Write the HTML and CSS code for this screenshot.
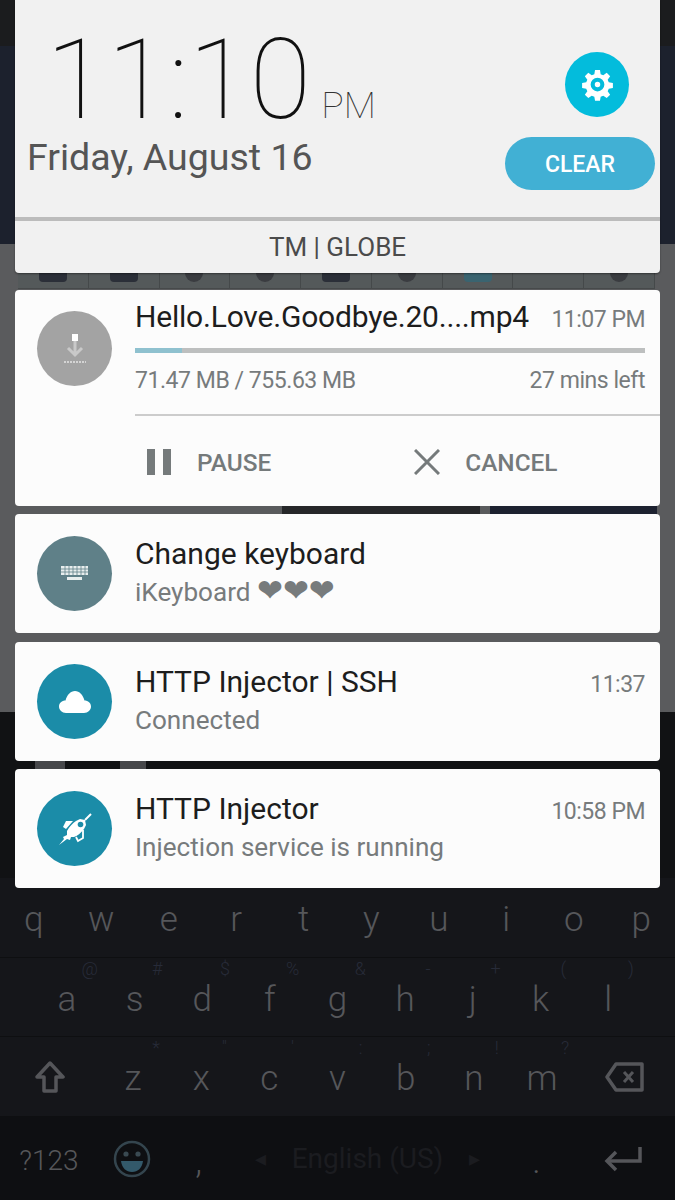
FILE: index.html
```html
<!DOCTYPE html>
<html lang="en">
<head>
    <meta charset="UTF-8">
    <meta name="viewport" content="width=device-width, initial-scale=1.0">
    <title>Notifications</title>
    <link rel="stylesheet" href="styles.css">
</head>
<body>
    <div class="screen">
        <!-- Dimmed app behind the shade -->
        <div class="wall">
            <div class="band-top"></div>
            <div class="band-navy"></div>
            <div class="band-gray">
                <div class="toolbar">
                    <div class="tool"><span class="tool-ico"></span></div>
                    <div class="tool"><span class="tool-ico"></span></div>
                    <div class="tool"><span class="tool-ico round"></span></div>
                    <div class="tool"><span class="tool-ico round"></span></div>
                    <div class="tool"><span class="tool-ico"></span></div>
                    <div class="tool"><span class="tool-ico round"></span></div>
                    <div class="tool"><span class="tool-ico teal"></span></div>
                    <div class="tool"></div>
                    <div class="tool"><span class="tool-ico round"></span></div>
                </div>
                <div class="thumbs">
                    <div class="thumb-dark"></div>
                    <div class="thumb-navy"></div>
                </div>
            </div>
            <div class="keyboard">
                <div class="peek">
                    <span class="peek-a"></span>
                    <span class="peek-b"></span>
                </div>
                <div class="kb-row">
                    <div class="key">q</div><div class="key">w</div><div class="key">e</div><div class="key">r</div><div class="key">t</div>
                    <div class="key">y</div><div class="key">u</div><div class="key">i</div><div class="key">o</div><div class="key">p</div>
                </div>
                <div class="kb-row home">
                    <div class="key">a<span class="hint">@</span></div>
                    <div class="key">s<span class="hint">#</span></div>
                    <div class="key">d<span class="hint">$</span></div>
                    <div class="key">f<span class="hint">%</span></div>
                    <div class="key">g<span class="hint">&amp;</span></div>
                    <div class="key">h<span class="hint">-</span></div>
                    <div class="key">j<span class="hint">+</span></div>
                    <div class="key">k<span class="hint">(</span></div>
                    <div class="key">l<span class="hint">)</span></div>
                </div>
                <div class="kb-row lower">
                    <div class="key side">
                        <svg width="30" height="32" viewBox="0 0 30 32"><path d="M15 2 L28 16 H21 V30 H9 V16 H2 Z" fill="none" stroke="#55565a" stroke-width="3.5" stroke-linejoin="round"/></svg>
                    </div>
                    <div class="key">z<span class="hint">*</span></div>
                    <div class="key">x<span class="hint">"</span></div>
                    <div class="key">c<span class="hint">'</span></div>
                    <div class="key">v<span class="hint">:</span></div>
                    <div class="key">b<span class="hint">;</span></div>
                    <div class="key">n<span class="hint">!</span></div>
                    <div class="key">m<span class="hint">?</span></div>
                    <div class="key side">
                        <svg width="40" height="30" viewBox="0 0 40 30"><path d="M11 2 H37 V28 H11 L2 15 Z" fill="none" stroke="#55565a" stroke-width="3.5" stroke-linejoin="round"/><path d="M19 10 L28 20 M28 10 L19 20" stroke="#55565a" stroke-width="3"/></svg>
                    </div>
                </div>
                <div class="kb-row bottom">
                    <div class="key sym">?123</div>
                    <div class="key">
                        <svg width="38" height="38" viewBox="0 0 38 38"><circle cx="19" cy="19" r="17" fill="none" stroke="#34454e" stroke-width="2.5"/><circle cx="13" cy="14" r="2.6" fill="#3a4a52"/><circle cx="25" cy="14" r="2.6" fill="#3a4a52"/><path d="M8 21 H30 C29 28 25 32 19 32 C13 32 9 28 8 21 Z" fill="#33596a"/></svg>
                    </div>
                    <div class="key punct">,</div>
                    <div class="lang"><span class="lang-arrow">&#9666;</span>English (US)<span class="lang-arrow">&#9656;</span></div>
                    <div class="key punct">.</div>
                    <div class="key">
                        <svg width="38" height="26" viewBox="0 0 38 26"><path d="M36 1 V15 H5" fill="none" stroke="#55565a" stroke-width="3.5"/><path d="M12 6 L3 15 L12 24" fill="none" stroke="#55565a" stroke-width="3.5"/></svg>
                    </div>
                </div>
            </div>
        </div>

        <!-- Notification shade -->
        <div class="shade">
            <div class="quick">
                <div class="quick-top">
                    <div class="clock">
                        <div class="time">11:10<span class="ampm">PM</span></div>
                        <div class="date">Friday, August 16</div>
                    </div>
                    <div class="quick-btns">
                        <div class="gear">
                            <svg width="33" height="33" viewBox="0 0 24 24"><path fill="#fff" fill-rule="evenodd" d="M10.200 1.500h3.600l.5 3 1.900.8 2.500-1.800 2.500 2.500-1.800 2.500.8 1.900 3 .5v3.600l-3 .5-.8 1.900 1.800 2.500-2.500 2.500-2.500-1.800-1.900.8-.5 3h-3.600l-.5-3-1.900-.8-2.500 1.800-2.500-2.500 1.800-2.500-.8-1.900-3-.5v-3.600l3-.5.8-1.900-1.800-2.500 2.500-2.500 2.500 1.800 1.900-.8zM12 7a5 5 0 1 0 0 10 5 5 0 0 0 0-10zm0 3a2 2 0 1 1 0 4 2 2 0 0 1 0-4z"/></svg>
                        </div>
                        <div class="clear">CLEAR</div>
                    </div>
                </div>
                <div class="carrier">TM | GLOBE</div>
            </div>

            <div class="card download">
                <div class="avatar gray">
                    <svg width="30" height="42" viewBox="0 0 30 42"><rect x="12" y="6" width="6" height="7" fill="#fff"/><path d="M15 13 V27 M8 20 L15 27 L22 20" fill="none" stroke="#c9c9c9" stroke-width="3"/><path d="M4 34 H26" stroke="#d4d4d4" stroke-width="2" stroke-dasharray="2 1"/></svg>
                </div>
                <div class="body">
                    <div class="line">
                        <div class="title">Hello.Love.Goodbye.20....mp4</div>
                        <div class="stamp">11:07 PM</div>
                    </div>
                    <div class="progress"><div class="progress-fill"></div></div>
                    <div class="line meta">
                        <div>71.47 MB / 755.63 MB</div>
                        <div>27 mins left</div>
                    </div>
                    <div class="actions">
                        <div class="action pause-act">
                            <svg width="24" height="26" viewBox="0 0 24 26"><rect width="8" height="26" fill="#757a7b"/><rect x="16" width="8" height="26" fill="#757a7b"/></svg>
                            PAUSE
                        </div>
                        <div class="action cancel-act">
                            <svg width="26" height="26" viewBox="0 0 26 26"><path d="M1 1 L25 25 M25 1 L1 25" stroke="#757a7b" stroke-width="3"/></svg>
                            CANCEL
                        </div>
                    </div>
                </div>
            </div>

            <div class="card small">
                <div class="avatar slate">
                    <svg width="27" height="15" viewBox="0 0 27 15"><path fill="#e8eeee" d="M0 0h27v9H0z"/><path stroke="#5f8088" stroke-width=".8" d="M0 3h27M0 6h27M4 0v9M8 0v9M12 0v9M16 0v9M20 0v9M24 0v9"/><rect x="6" y="11" width="15" height="3" fill="#e8eeee"/></svg>
                </div>
                <div class="body">
                    <div class="line"><div class="title">Change keyboard</div></div>
                    <div class="sub">iKeyboard <span class="hearts">&#10084;&#10084;&#10084;</span></div>
                </div>
            </div>

            <div class="card small">
                <div class="avatar teal-bg">
                    <svg width="32" height="22" viewBox="0 0 32 22"><path fill="#fff" d="M7 22 C3 22 0 19 0 15.500 C0 12 3 9.500 6.500 9.500 C8 4 11.500 0 16 0 C20.500 0 24 4 25.500 9.500 C29 9.500 32 12 32 15.500 C32 19 29 22 25 22 Z"/></svg>
                </div>
                <div class="body">
                    <div class="line">
                        <div class="title">HTTP Injector | SSH</div>
                        <div class="stamp">11:37</div>
                    </div>
                    <div class="sub">Connected</div>
                </div>
            </div>

            <div class="card small">
                <div class="avatar teal-bg">
                    <svg width="34" height="34" viewBox="0 0 34 34"><path fill="#fff" d="M1 33 L6 27 L5 25 L9 23 L9 19 C11 15 15 11 18 9 L22 7 L27 8 L28 13 L26 17 C23 21 19 24 16 25 L13 25 L12 28 L9 27 Z"/><circle cx="22.500" cy="12.500" r="2.800" fill="#1b8ca8"/><path fill="#fff" d="M15 9 L8 9 L5 15 L8 17 Z"/><path d="M25 18 L25 26 L20 29 L18 25" fill="none" stroke="#fff" stroke-width="1.800"/><path d="M27 8 L33 2" stroke="#fff" stroke-width="2"/></svg>
                </div>
                <div class="body">
                    <div class="line">
                        <div class="title">HTTP Injector</div>
                        <div class="stamp">10:58 PM</div>
                    </div>
                    <div class="sub">Injection service is running</div>
                </div>
            </div>
        </div>
    </div>
</body>
</html>
```

FILE: styles.css
```css
/* General reset */
* {
    margin: 0;
    padding: 0;
    box-sizing: border-box;
}

body {
    font-family: 'Roboto', 'Liberation Sans', sans-serif;
    background: #111214;
}

.screen {
    position: relative;
    width: 675px;
    height: 1200px;
    overflow: hidden;
}

/* App behind the shade */
.wall {
    display: flex;
    flex-direction: column;
    height: 100%;
}

.band-top {
    height: 46px;
    background: #1b1c1e;
}

.band-navy {
    height: 198px;
    background: #1c212d;
}

.band-gray {
    height: 468px;
    background: #5a5b5d;
}

.toolbar {
    display: flex;
    height: 45px;
    margin: 0 20px 0 18px;
    background: #54595a;
    border-bottom: 1px solid #46494a;
}

.tool {
    flex: 1;
    display: flex;
    align-items: flex-end;
    justify-content: center;
    padding-bottom: 6px;
    border-right: 1px solid #45494a;
}

.tool-ico {
    width: 28px;
    height: 14px;
    background: #2b2f38;
    border-radius: 0 0 4px 4px;
}

.tool-ico.round {
    width: 18px;
    height: 12px;
    background: #3a3c40;
    border-radius: 0 0 9px 9px;
}

.tool-ico.teal {
    height: 16px;
    background: #3a6470;
}

.thumbs {
    display: flex;
    height: 20px;
    margin: 210px 18px 0 282px;
}

.thumb-dark {
    width: 198px;
    background: #262729;
}

.thumb-navy {
    flex: 1;
    margin-left: 10px;
    background: #1d2230;
}

/* Keyboard */
.keyboard {
    flex: 1;
    display: flex;
    flex-direction: column;
    background: #15161a;
    color: #56575a;
}

.peek {
    display: flex;
    height: 166px;
    padding-top: 49px;
    background: #111214;
}

.peek-a {
    width: 30px;
    height: 8px;
    margin-left: 35px;
    background: #46474a;
}

.peek-b {
    width: 26px;
    height: 8px;
    margin-left: 55px;
    background: #46474a;
}

.kb-row {
    display: flex;
    height: 80px;
    border-bottom: 1px solid #0e0f11;
}

.key {
    position: relative;
    flex: 1;
    display: flex;
    align-items: center;
    justify-content: center;
    padding-top: 4px;
    font-size: 35px;
    font-weight: 300;
}

.home {
    padding: 0 33px;
    height: 79px;
}

.lower {
    height: 80px;
}

.key.side {
    flex: 0 0 99px;
    padding: 0;
}

.hint {
    position: absolute;
    top: 0;
    right: 0;
    width: 22px;
    text-align: center;
    font-size: 18px;
    color: #272b38;
}

.bottom {
    height: 83px;
    border: 0;
    background: #0e0f12;
}

.bottom .key {
    flex: 0 0 67px;
    padding: 0;
}

.bottom .key:last-child {
    flex: 0 0 105px;
}

.bottom .key.sym {
    flex: 0 0 98px;
    padding-top: 3px;
    font-size: 28px;
}

.bottom .key.punct {
    padding-top: 6px;
}

.lang {
    flex: 1;
    display: flex;
    align-items: center;
    justify-content: center;
    gap: 26px;
    font-size: 28px;
    color: #1b1c20;
}

.lang-arrow {
    font-size: 22px;
}

/* Shade */
.shade {
    position: absolute;
    top: 0;
    left: 15px;
    width: 645px;
    display: flex;
    flex-direction: column;
}

.quick {
    height: 273px;
    background: #f1f1f1;
    border-radius: 0 0 4px 4px;
    box-shadow: 0 1px 2px rgba(0, 0, 0, 0.4);
}

.quick-top {
    display: flex;
    justify-content: space-between;
    height: 221px;
    border-bottom: 4px solid #bcbcbc;
}

.clock {
    padding: 34px 0 0 12px;
}

.time {
    padding-left: 19px;
    font-size: 112px;
    line-height: 92px;
    font-weight: 100;
    color: #111;
}

.ampm {
    margin-left: 10px;
    font-size: 37.500px;
    color: #333;
}

.date {
    margin-top: -15px;
    font-size: 37.500px;
    line-height: 42px;
    color: #555;
}

.quick-btns {
    display: flex;
    flex-direction: column;
    align-items: flex-end;
    padding: 52px 5px 0 0;
}

.gear {
    display: flex;
    align-items: center;
    justify-content: center;
    width: 64px;
    height: 65px;
    margin-right: 26px;
    background: #03bcdc;
    border-radius: 50%;
}

.clear {
    width: 150px;
    height: 53px;
    margin-top: 20px;
    background: #41b0d4;
    border-radius: 27px;
    color: #fff;
    font-size: 23px;
    font-weight: 500;
    line-height: 55px;
    text-align: center;
}

.carrier {
    height: 48px;
    font-size: 26px;
    line-height: 52px;
    text-align: center;
    color: #4b4b4b;
}

.card {
    display: flex;
    background: #fcfcfc;
    border-radius: 4px;
}

.download {
    height: 216px;
    margin-top: 17px;
    padding-top: 21px;
}

.small {
    height: 119px;
    margin-top: 8px;
    padding-top: 22px;
}

.small + .small {
    margin-top: 9px;
}

.small + .small + .small {
    margin-top: 8px;
}

.avatar {
    flex: 0 0 75px;
    display: flex;
    align-items: center;
    justify-content: center;
    height: 75px;
    margin: 0 23px 0 22px;
    border-radius: 50%;
}

.gray {
    background: #a3a3a3;
}

.slate {
    background: #5f8088;
}

.teal-bg {
    background: #1b8ca8;
}

.body {
    flex: 1;
    min-width: 0;
}

.line {
    display: flex;
    justify-content: space-between;
    align-items: baseline;
    padding-right: 15px;
}

.title {
    font-size: 30px;
    line-height: 36px;
    color: #1d1d1d;
}

.stamp {
    font-size: 23px;
    letter-spacing: -0.5px;
    color: #777b7c;
}

.sub {
    margin-top: 2px;
    font-size: 26.100px;
    line-height: 36px;
    color: #777b7c;
}

.hearts {
    font-family: 'DejaVu Sans', sans-serif;
    font-size: 31px;
    line-height: 1;
}

.download .title {
    letter-spacing: -0.2px;
}

.download .body {
    margin-top: -21px;
    padding-top: 9px;
}

.progress {
    height: 5px;
    margin: 13px 15px 0 0;
    background: #bdbfbf;
}

.progress-fill {
    width: 47px;
    height: 100%;
    background: #8fc1cf;
}

.meta {
    margin-top: 14px;
    padding-bottom: 19px;
    font-size: 23px;
    letter-spacing: -0.45px;
    line-height: 28px;
    color: #777b7c;
    border-bottom: 2px solid #cccccc;
}

.actions {
    display: flex;
    height: 92px;
    align-items: center;
}

.action {
    display: flex;
    align-items: center;
    font-size: 24.400px;
    font-weight: 500;
    color: #757a7b;
}

.pause-act {
    gap: 26px;
    padding-left: 12px;
}

.cancel-act {
    gap: 25px;
    margin-left: 143px;
}
```
